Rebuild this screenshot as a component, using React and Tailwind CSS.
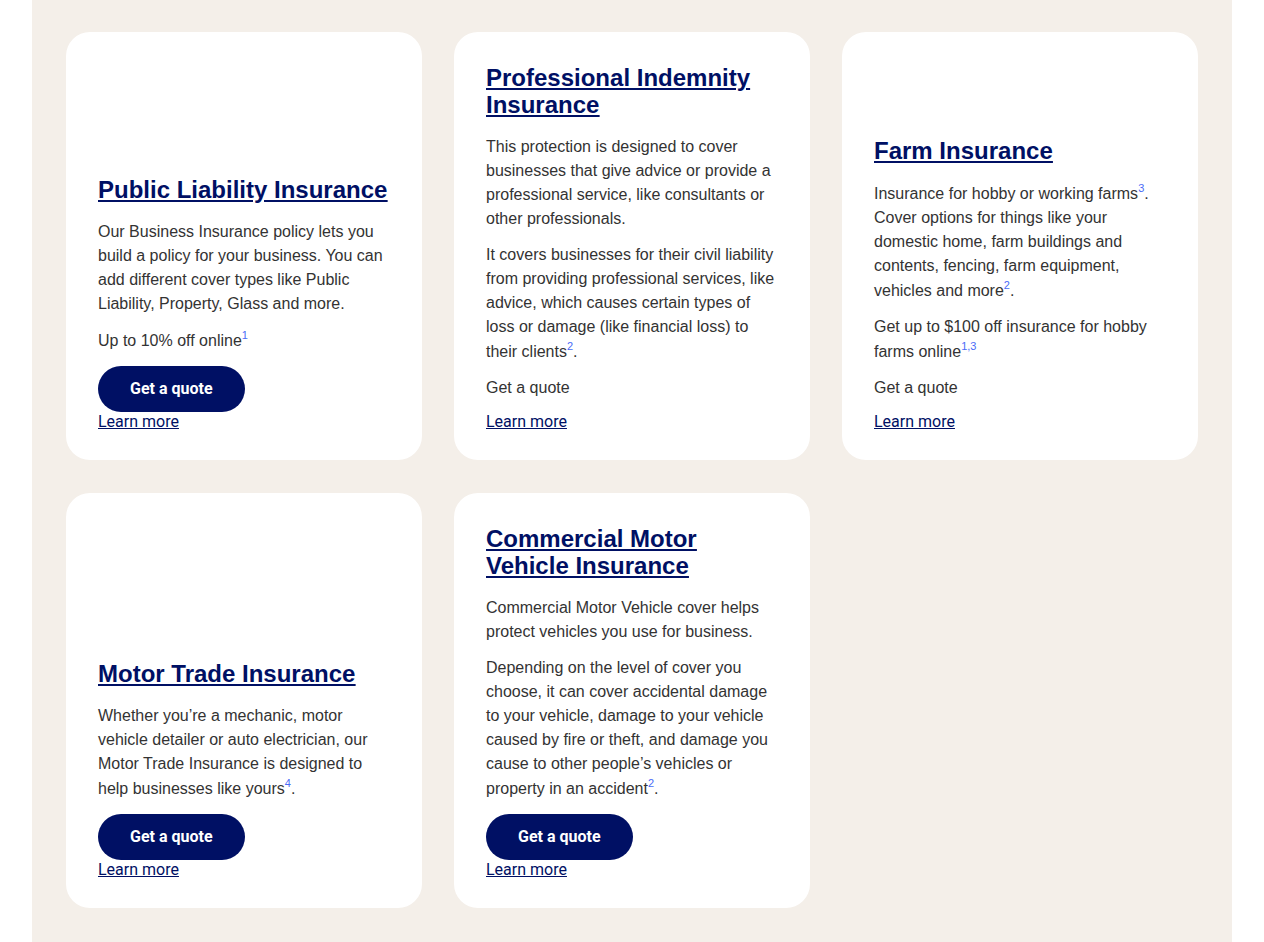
import React from 'react';

// Product cards for business insurance. Content sits at the bottom of each card.

const Sup = ({ children }) => (
  <sup className="text-[11px] leading-[15.5px] top-0 align-[7px] text-[#4a6cf7]">{children}</sup>
);

const products = [
  {
    title: 'Public Liability Insurance',
    paragraphs: [
      <>Our Business Insurance policy lets you build a policy for your business. You can add different cover types like Public Liability, Property, Glass and more.</>,
      <>Up to 10% off online<Sup>1</Sup></>,
    ],
    button: true,
  },
  {
    title: 'Professional Indemnity Insurance',
    paragraphs: [
      <>This protection is designed to cover businesses that give advice or provide a professional service, like consultants or other professionals.</>,
      <>It covers businesses for their civil liability from providing professional services, like advice, which causes certain types of loss or damage (like financial loss) to their clients<Sup>2</Sup>.</>,
    ],
    button: false,
  },
  {
    title: 'Farm Insurance',
    paragraphs: [
      <>Insurance for hobby or working farms<Sup>3</Sup>. Cover options for things like your domestic home, farm buildings and contents, fencing, farm equipment, vehicles and more<Sup>2</Sup>.</>,
      <>Get up to $100 off insurance for hobby farms online<Sup>1,3</Sup></>,
    ],
    button: false,
  },
  {
    title: 'Motor Trade Insurance',
    paragraphs: [
      <>Whether you’re a mechanic, motor vehicle detailer or auto electrician, our Motor Trade Insurance is designed to help businesses like yours<Sup>4</Sup>.</>,
    ],
    button: true,
  },
  {
    title: 'Commercial Motor Vehicle Insurance',
    paragraphs: [
      <>Commercial Motor Vehicle cover helps protect vehicles you use for business.</>,
      <>Depending on the level of cover you choose, it can cover accidental damage to your vehicle, damage to your vehicle caused by fire or theft, and damage you cause to other people’s vehicles or property in an accident<Sup>2</Sup>.</>,
    ],
    button: true,
  },
];

const ProductCard = ({ product }) => (
  <div className="bg-white rounded-3xl px-8 pt-8 pb-[28px] flex flex-col justify-end">
    <h3 className="text-[24px] leading-[27px] font-bold text-[#001064] underline mb-[17px]">
      <a href="#">{product.title}</a>
    </h3>
    {product.paragraphs.map((p, i) => (
      <p key={i} className="text-base leading-6 text-[#333333] mb-3">{p}</p>
    ))}
    {product.button ? (
      <a
        href="#"
        className="self-start bg-[#001064] text-white rounded-full px-8 h-[46px] flex items-center font-['Roboto',sans-serif] font-bold text-base mt-px"
      >
        Get a quote
      </a>
    ) : (
      <p className="text-base leading-6 text-[#333333] mb-3">Get a quote</p>
    )}
    <a href="#" className="self-start font-['Roboto',sans-serif] text-base leading-5 text-[#001064] underline">
      Learn more
    </a>
  </div>
);

const App = () => {
  return (
    <div className="bg-white min-h-screen font-['Liberation_Sans',Arial,sans-serif]">
      <div className="mx-8 min-h-screen bg-[#f4efe9] px-[34px] pt-8 pb-8">
        <div className="grid grid-cols-3 gap-x-8 gap-y-[33px]">
          {products.map((product, i) => (
            <ProductCard key={i} product={product} />
          ))}
        </div>
      </div>
    </div>
  );
};

export default App;
